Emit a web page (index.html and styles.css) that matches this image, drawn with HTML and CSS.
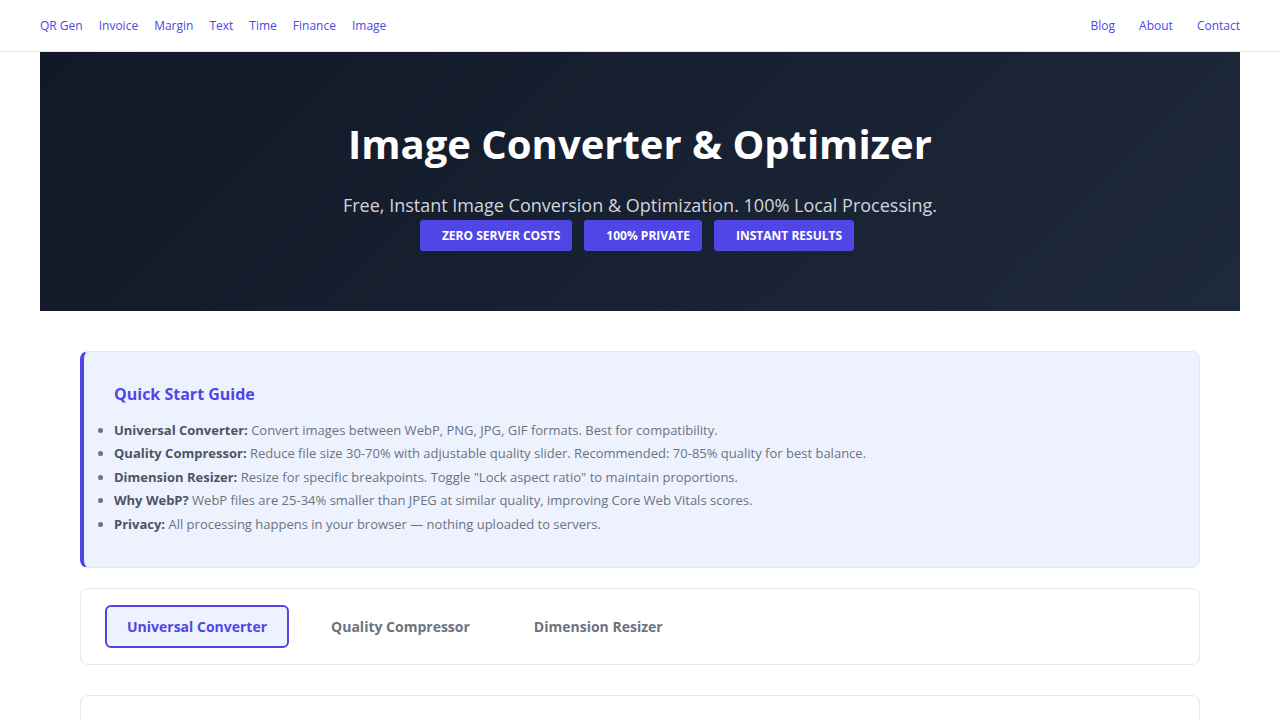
FILE: index.html
```html
<!DOCTYPE html>
<html lang="en">
<head>
    <meta charset="UTF-8">
    <meta name="viewport" content="width=device-width, initial-scale=1.0">
    <title>Image Converter &amp; Optimizer</title>
    <link rel="stylesheet" href="styles.css">
</head>
<body>
    <header class="site-header">
        <nav class="nav-left">
            <a href="#">QR Gen</a>
            <a href="#">Invoice</a>
            <a href="#">Margin</a>
            <a href="#">Text</a>
            <a href="#">Time</a>
            <a href="#">Finance</a>
            <a href="#">Image</a>
        </nav>
        <nav class="nav-right">
            <a href="#">Blog</a>
            <a href="#">About</a>
            <a href="#">Contact</a>
        </nav>
    </header>

    <section class="hero">
        <h1>Image Converter &amp; Optimizer</h1>
        <p class="hero-sub">Free, Instant Image Conversion &amp; Optimization. 100% Local Processing.</p>
        <div class="badges">
            <span class="badge">Zero Server Costs</span>
            <span class="badge">100% Private</span>
            <span class="badge">Instant Results</span>
        </div>
    </section>

    <main class="container">
        <div class="guide">
            <h2>Quick Start Guide</h2>
            <ul>
                <li><strong>Universal Converter:</strong> Convert images between WebP, PNG, JPG, GIF formats. Best for compatibility.</li>
                <li><strong>Quality Compressor:</strong> Reduce file size 30-70% with adjustable quality slider. Recommended: 70-85% quality for best balance.</li>
                <li><strong>Dimension Resizer:</strong> Resize for specific breakpoints. Toggle "Lock aspect ratio" to maintain proportions.</li>
                <li><strong>Why WebP?</strong> WebP files are 25-34% smaller than JPEG at similar quality, improving Core Web Vitals scores.</li>
                <li><strong>Privacy:</strong> All processing happens in your browser — nothing uploaded to servers.</li>
            </ul>
        </div>

        <div class="tabs">
            <button class="tab active">Universal Converter</button>
            <button class="tab">Quality Compressor</button>
            <button class="tab">Dimension Resizer</button>
        </div>

        <div class="panel"></div>
    </main>
</body>
</html>
```

FILE: styles.css
```css
body {
    font-family: "Open Sans", "Noto Sans", sans-serif;
    margin: 0;
    padding: 0;
    background-color: #ffffff;
    color: #374151;
}
.site-header {
    height: 51px;
    border-bottom: 1px solid #e5e7eb;
    display: flex;
    justify-content: space-between;
    align-items: center;
    padding: 0 40px;
}
.site-header nav {
    display: flex;
    margin-bottom: 1px;
}
.nav-left {
    gap: 16px;
}
.nav-right {
    gap: 24px;
}
.site-header a {
    color: #4f46e5;
    text-decoration: none;
    font-size: 12px;
}
.hero {
    margin: 0 40px;
    padding: 68px 20px 60px;
    background: linear-gradient(135deg, #111827 0%, #1e293b 100%);
    text-align: center;
    color: white;
}
.hero h1 {
    margin: 0 0 22px;
    font-size: 40px;
    font-weight: 700;
    line-height: 48px;
}
.hero-sub {
    margin: 0;
    font-size: 18px;
    line-height: 30px;
    color: #d1d5db;
}
.badges {
    display: flex;
    justify-content: center;
    gap: 12px;
    padding-right: 6px;
}
.badge {
    background-color: #4f46e5;
    color: white;
    font-size: 12px;
    font-weight: 700;
    text-transform: uppercase;
    padding: 7px 12px 7px 22px;
    line-height: 17px;
    border-radius: 3px;
}
.container {
    max-width: 1120px;
    margin: 0 auto;
    padding: 40px 0;
}
.guide {
    background-color: #eef2ff;
    border: 1px solid #e0e7ff;
    border-left: 4px solid #4f46e5;
    border-radius: 8px;
    padding: 29px 30px 31px;
}
.guide h2 {
    margin: 0 0 12px;
    color: #4f46e5;
    font-size: 16px;
    font-weight: 700;
    line-height: 26px;
}
.guide ul {
    margin: 0;
    padding: 0;
}
.guide li {
    font-size: 13px;
    line-height: 23.4px;
    color: #6b7280;
}
.guide strong {
    color: #4b5563;
}
.tabs {
    margin-top: 20px;
    border: 1px solid #e5e7eb;
    border-radius: 8px;
    padding: 16px 24px;
    display: flex;
    gap: 20px;
}
.tab {
    font-family: inherit;
    font-size: 14px;
    font-weight: 700;
    color: #6b7280;
    background: none;
    border: 2px solid transparent;
    border-radius: 6px;
    padding: 10px 20px;
    line-height: 19px;
    cursor: pointer;
}
.tab.active {
    border-color: #4f46e5;
    background-color: #eef2ff;
    color: #4f46e5;
}
.panel {
    margin-top: 30px;
    border: 1px solid #e5e7eb;
    border-radius: 8px;
    height: 300px;
}
```
